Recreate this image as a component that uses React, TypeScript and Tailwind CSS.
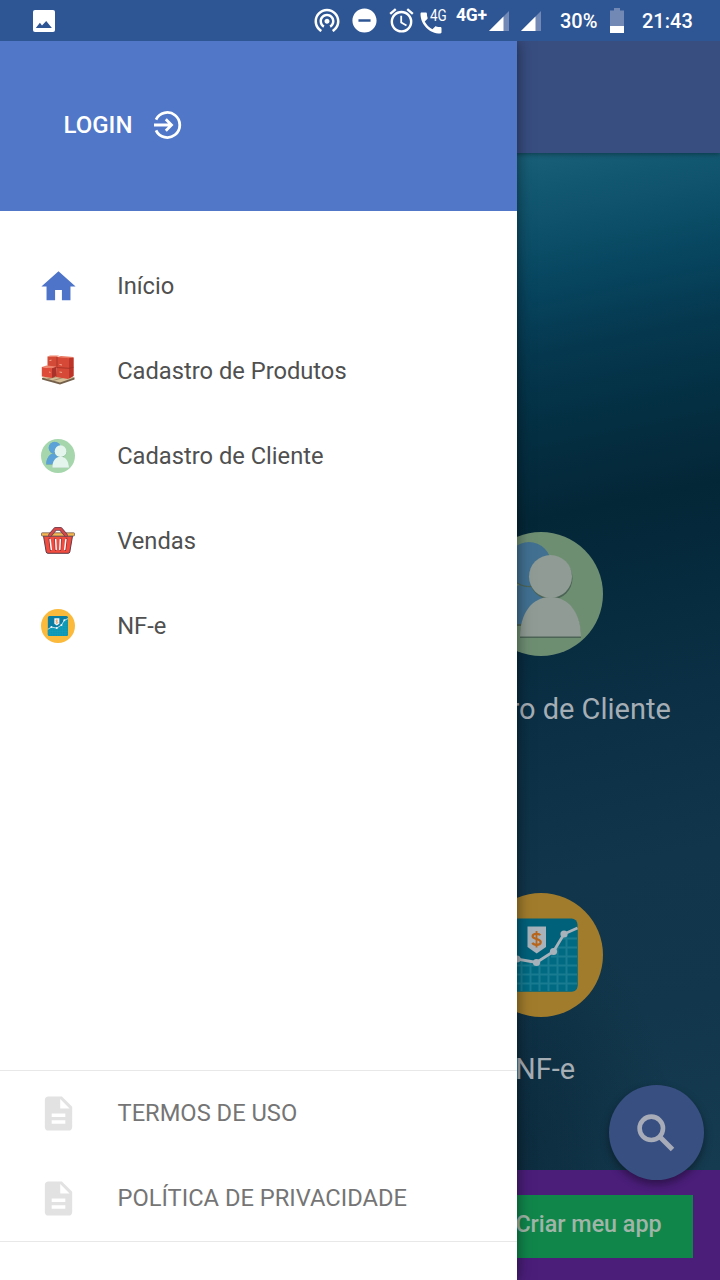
import type { ReactNode } from "react";
import { MdAlarm, MdDescription, MdDoNotDisturbOn, MdHome, MdPhone, MdWifiTethering } from "react-icons/md";

function PhotoIcon() {
  return (
    <svg className="ml-[32.5px] h-[22px] w-[22px]" viewBox="0 0 22 22">
      <rect width="22" height="22" rx="2" fill="#fff" />
      <path d="M2.8 18 6.9 12.8 9 15.4 13.2 11 18.9 18Z" fill="#2f5694" />
    </svg>
  );
}

function Signal() {
  return (
    <svg className="h-5 w-5 shrink-0" viewBox="0 0 20 20">
      <path d="M20 0V20H0Z" fill="#7289b6" />
      <path d="M14.5 5.5V20H0Z" fill="#fff" />
    </svg>
  );
}

function Battery() {
  return (
    <svg className="ml-[13px] h-[25px] w-[14px] shrink-0" viewBox="0 0 14 25">
      <path d="M4 0H10V2.5H14V18H0V2.5H4Z" fill="#7289b6" />
      <path d="M0 18H14V25H0Z" fill="#fff" />
    </svg>
  );
}

function StatusBar() {
  return (
    <header className="flex h-[41px] shrink-0 items-center bg-[#2f5694] text-white">
      <PhotoIcon />
      <MdWifiTethering className="mb-[1px] ml-[257.5px] h-[30px] w-[30px] shrink-0" />
      <MdDoNotDisturbOn className="ml-[8px] h-[29px] w-[29px] shrink-0" />
      <MdAlarm className="ml-[8px] h-[29px] w-[29px] shrink-0" />
      <div className="relative ml-[1px] mt-[4px] h-7 w-7 shrink-0">
        <MdPhone className="h-7 w-7" />
        <span className="absolute left-[13px] top-[-1px] origin-left scale-x-[0.84] text-[16px] leading-none">4G</span>
      </div>
      <span className="ml-[11px] mb-[9px] w-[33px] text-[17.5px] font-bold leading-none tracking-[-0.2px]">4G+</span>
      <Signal />
      <div className="ml-3 flex">
        <Signal />
      </div>
      <span className="ml-[19px] w-[37px] text-[20px] font-medium">30%</span>
      <Battery />
      <span className="ml-[18px] text-[20px] font-medium">21:43</span>
    </header>
  );
}

function LoginIcon() {
  return (
    <svg className="h-7 w-7" viewBox="0 0 28 28" fill="none" stroke="#fff" strokeWidth="2.8">
      <path d="M2 8.6A12.5 12.5 0 1 1 2 19.4" />
      <path d="M0 14H17M11.8 8.3 17.5 14 11.8 19.7" />
    </svg>
  );
}

function SearchIcon() {
  return (
    <svg className="h-[38px] w-[38px]" viewBox="0 0 38 38" fill="none" stroke="#a8acb8">
      <circle cx="14.300" cy="14.300" r="11.700" strokeWidth="4.600" />
      <path d="M23 23 35.500 35.500" strokeWidth="5" />
    </svg>
  );
}

function BoxesIcon() {
  return (
    <svg className="mb-[3px] h-[34px] w-[34px]" viewBox="0 0 34 34">
      <path d="M1 26 15 22 33.500 25.500V27.500L19 32.500 1 27.500Z" fill="#75614b" />
      <path d="M1 25.500 15 22 33.500 25.500 19 30.500Z" fill="#d6c09a" />
      <path d="M6 27 20 23.500M12 28.500 26 24.500" stroke="#a58d69" strokeWidth="1" />
      <path d="M6.500 4.500 16 4 16 16 6.500 15.500Z" fill="#d34a36" />
      <path d="M6.500 4.500 9 3.500 18 3.500 16 5Z" fill="#ee836a" />
      <path d="M16 5 32.500 5.500 32.500 24 27 27 15 25Z" fill="#d54936" />
      <path d="M28 6 32.500 5.500 32.500 24 28 26.500Z" fill="#bd3528" />
      <path d="M16 5 20 4 32.500 5 28 6.300Z" fill="#ea7860" />
      <path d="M.800 15 11 16 11 26 .800 24.500Z" fill="#de4c39" />
      <path d="M11 16 15.500 14.600 15.500 24 11 26Z" fill="#a9322a" />
      <path d="M.800 15 5.500 13.500 15.500 14.600 11 16.300Z" fill="#ee836c" />
      <path d="M16 15.500 28 16.300 32.500 15.300M16 5V14.500" stroke="#9d3026" strokeWidth=".8" fill="none" />
      <path d="M18.500 12.500 21 13M18.500 20 21 20.400M8 20 9.500 20.400M8.500 8.500 10.500 8.200" stroke="#f8b29c" strokeWidth=".9" />
    </svg>
  );
}

function BasketIcon() {
  return (
    <svg className="mb-[2px] h-[34px] w-[34px]" viewBox="0 0 34 34">
      <path d="M2.500 13H31.500L28.800 29Q28.500 30.300 27 30.300H7Q5.500 30.300 5.200 29Z" fill="#f34b3e" stroke="#5b3b49" strokeWidth="1" />
      <path d="M8.500 16 9.800 27M14.300 16 14.800 27M19.700 16 19.200 27M25.500 16 24.200 27" stroke="#8b3038" strokeWidth="2" strokeLinecap="round" />
      <path d="M9.100 16.500 10.300 26.500M14.700 16.500 15.200 26.500M19.300 16.500 18.800 26.500M24.900 16.500 23.700 26.500" stroke="#fff" strokeWidth="1.500" strokeLinecap="round" />
      <rect x=".500" y="9.800" width="33" height="3.200" rx=".700" fill="#f5b74f" stroke="#75605b" strokeWidth=".800" />
      <path d="M9 12.300 14.500 5.800H19.500L25 12.300" fill="none" stroke="#6b4150" strokeWidth="3.700" strokeLinejoin="round" strokeLinecap="round" />
      <path d="M9 12.300 14.500 5.800H19.500L25 12.300" fill="none" stroke="#d74849" strokeWidth="2.300" strokeLinejoin="round" strokeLinecap="round" />
    </svg>
  );
}

type PeopleProps = { className: string; disc: string; back: string; front: string; shade: string };

function PeopleIcon({ className, disc, back, front, shade }: PeopleProps) {
  return (
    <svg className={className} viewBox="0 0 124 124">
      <circle cx="62" cy="62" r="62" fill={disc} />
      <path d="M19 94C19 71 31 53 50 53S81 71 81 94Z" fill={shade} />
      <path d="M19 92C19 71 31 51 50 51S81 71 81 92Z" fill={back} />
      <circle cx="50" cy="33.200" r="22" fill={shade} />
      <circle cx="50" cy="32" r="22" fill={back} />
      <path d="M41 106C41 84 52 66 71.500 66S102 84 102 106Z" fill={shade} />
      <circle cx="72" cy="46.200" r="21.500" fill={shade} />
      <path d="M41 104.500C41 83 52 65 71.500 65S102 83 102 104.500Z" fill={front} />
      <circle cx="71.500" cy="44.500" r="21.500" fill={front} />
    </svg>
  );
}

type ChartProps = { className: string; disc: string; panel: string; area: string; grid: string; line: string; mark: string };

function ChartIcon({ className, disc, panel, area, grid, line, mark }: ChartProps) {
  return (
    <svg className={className} viewBox="0 0 124 124">
      <circle cx="62" cy="62" r="62" fill={disc} />
      <rect x="25" y="25.500" width="73.500" height="73" rx="6" fill={panel} />
      <path d="M25 74 38 66 57.500 69.500 74.500 58.500 85 41 98.500 35V92.500Q98.500 98.500 92.500 98.500H31Q25 98.500 25 92.500Z" fill={area} />
      <path
        d="M33.500 70V98M42.500 68V98M51.500 69V98M60.500 68V98M69.500 62V98M78.500 52V98M87.500 41V98M83 45.500H98M79 54.500H98M72 63.500H98M30 72.500H98M25 81.500H98M25 90.500H98"
        stroke={grid}
        strokeWidth="2"
      />
      <path d="M25 74 38 66 57.500 69.500 74.500 58.500 85 41 98.500 35" fill="none" stroke={line} strokeWidth="2.800" />
      <g fill={line}>
        <circle cx="38" cy="66" r="3.600" />
        <circle cx="57.500" cy="69.500" r="3.600" />
        <circle cx="74.500" cy="58.500" r="3.600" />
        <circle cx="85" cy="41" r="3.600" />
        <path d="M48.500 33.500H67V54L57.700 60.500 48.500 54Z" />
      </g>
      <path
        d="M61.300 42.300Q60.500 40.800 57.500 40.800C54.800 40.800 53.600 42 53.600 43.200C53.600 46.500 61.700 45.500 61.700 49C61.700 50.800 60 51.800 57.500 51.800Q54.400 51.800 53.400 49.800"
        fill="none"
        stroke={mark}
        strokeWidth="2.200"
      />
      <path d="M57.500 38V54.500" stroke={mark} strokeWidth="1.800" />
    </svg>
  );
}

function DrawerItem({ icon, children }: { icon: ReactNode; children: ReactNode }) {
  return (
    <li className="flex h-[85px] items-center pl-[37.5px] text-[23.7px] text-[#505050]">
      <span className="flex w-[41px] shrink-0 justify-center">{icon}</span>
      <span className="ml-[38.7px] pt-[2px]">{children}</span>
    </li>
  );
}

function LegalItem({ children }: { children: ReactNode }) {
  return (
    <li className="flex h-[85px] items-center pl-[38px] text-[23.7px] text-[#757575]">
      <MdDescription className="h-[41px] w-[41px] shrink-0 text-[#e2e2e2]" />
      <span className="ml-[38.5px] pt-px">{children}</span>
    </li>
  );
}

function Drawer() {
  return (
    <aside className="absolute inset-y-0 left-0 flex w-[517px] flex-col bg-white shadow-[0_0_14px_rgba(0,0,0,0.5)]">
      <div className="flex h-[170px] shrink-0 items-center bg-[#5177c8] pb-[2px] pl-[63.5px]">
        <span className="w-[90px] text-[24px] font-medium text-white">LOGIN</span>
        <LoginIcon />
      </div>
      <ul className="flex flex-1 flex-col pt-[32px]">
        <DrawerItem icon={<MdHome className="mt-[2px] h-[41px] w-[41px] text-[#4d74c9]" />}>Início</DrawerItem>
        <DrawerItem icon={<BoxesIcon />}>Cadastro de Produtos</DrawerItem>
        <DrawerItem icon={<PeopleIcon className="h-[34px] w-[34px]" disc="#a5d6ac" back="#5aa2d8" front="#e4f5ed" shade="#80ad91" />}>
          Cadastro de Cliente
        </DrawerItem>
        <DrawerItem icon={<BasketIcon />}>Vendas</DrawerItem>
        <DrawerItem
          icon={<ChartIcon className="h-[34px] w-[34px]" disc="#fbba3b" panel="#0b7fa3" area="#0d97b5" grid="#199fbc" line="#eef4f7" mark="#ee8530" />}
        >
          NF-e
        </DrawerItem>
      </ul>
      <ul className="flex shrink-0 flex-col border-y border-[#e8e8e8]">
        <LegalItem>TERMOS DE USO</LegalItem>
        <LegalItem>POLÍTICA DE PRIVACIDADE</LegalItem>
      </ul>
      <div className="h-[38px] shrink-0" />
    </aside>
  );
}

function HomeScreen() {
  return (
    <main className="flex flex-1 flex-col">
      <div className="z-0 h-[112px] shrink-0 bg-[#384d80] shadow-[0_1px_5px_rgba(0,0,0,0.4)]" />
      <div className="flex flex-1 flex-col bg-[radial-gradient(ellipse_180px_260px_at_500px_1000px,rgba(6,32,48,0.6),transparent),linear-gradient(168deg,#1c637b_8%,#145a73_12%,#0b4d66_18%,#07445e_21.5%,#05384f_27%,#043145_32%,#042737_41%,#062b3e_49%,#0b2f44_58%,#11354a_72%,#12374c_85%,#153b50_100%)] pl-[362px]">
        <div className="mt-[379px] flex h-[361px] shrink-0 flex-col items-center">
          <PeopleIcon className="h-[124px] w-[124px]" disc="#6e8e72" back="#417091" front="#8f9b94" shade="#4c6456" />
          <span className="mt-[32px] whitespace-nowrap pl-[7px] text-[29px] leading-[42px] text-[#a5adb5]">Cadastro de Cliente</span>
        </div>
        <div className="flex shrink-0 flex-col items-center">
          <ChartIcon className="h-[124px] w-[124px]" disc="#a17c2c" panel="#00617b" area="#006a82" grid="#197c91" line="#a7b2ba" mark="#b9661d" />
          <span className="mt-[31px] pl-[8px] text-[29px] leading-[42px] text-[#a5adb5]">NF-e</span>
        </div>
      </div>
      <footer className="flex h-[110px] shrink-0 items-start justify-end bg-[#4a1e79] pr-[27px] pt-[25px]">
        <button className="flex h-[63px] w-[209px] items-center justify-center bg-[#10864b] pb-[5px] text-[23.3px] font-medium text-[#a0b5a8]">
          Criar meu app
        </button>
      </footer>
    </main>
  );
}

export default function App() {
  return (
    <div className="flex h-[1280px] w-[720px] flex-col overflow-hidden font-['Roboto',sans-serif]">
      <StatusBar />
      <div className="relative flex flex-1 flex-col overflow-hidden">
        <HomeScreen />
        <button
          aria-label="Pesquisar"
          className="absolute bottom-[100px] right-[16px] flex h-[95px] w-[95px] items-center justify-center rounded-full bg-[#384f82] pr-[2px] shadow-[0_4px_9px_rgba(0,0,0,0.4)]"
        >
          <SearchIcon />
        </button>
        <Drawer />
      </div>
    </div>
  );
}
